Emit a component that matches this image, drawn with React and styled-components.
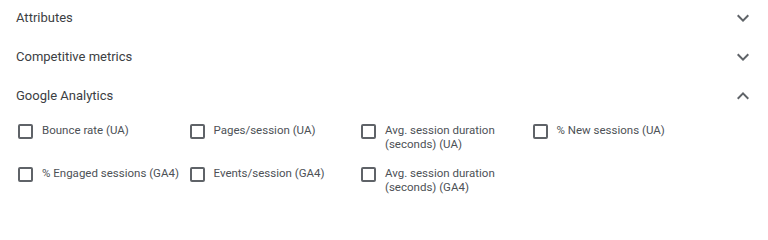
import React, { useState } from "react";
import styled, { createGlobalStyle } from "styled-components";

const GlobalStyle = createGlobalStyle`
  html, body {
    margin: 0;
    padding: 0;
    background: #ffffff;
  }
  body {
    font-family: Roboto, "Noto Sans", Arial, sans-serif;
    -webkit-font-smoothing: antialiased;
  }
`;

const sections = [
  { title: "Attributes", open: false },
  { title: "Competitive metrics", open: false },
  {
    title: "Google Analytics",
    open: true,
    items: [
      "Bounce rate (UA)",
      "Pages/session (UA)",
      "Avg. session duration (seconds) (UA)",
      "% New sessions (UA)",
      "% Engaged sessions (GA4)",
      "Events/session (GA4)",
      "Avg. session duration (seconds) (GA4)",
    ],
  },
];

const Chevron = ({ up }) => (
  <svg width="24" height="24" viewBox="0 0 24 24" fill="#5f6368">
    {up ? (
      <path d="M7.41 15.41 12 10.83l4.59 4.58L18 14l-6-6-6 6z" />
    ) : (
      <path d="M7.41 8.59 12 13.17l4.59-4.58L18 10l-6 6-6-6 1.41-1.41z" />
    )}
  </svg>
);

function Section({ title, open, items }) {
  const [checked, setChecked] = useState({});

  const toggle = (label) => {
    setChecked((c) => ({ ...c, [label]: !c[label] }));
  };

  return (
    <div>
      <Header>
        <Title>{title}</Title>
        <IconButton>
          <Chevron up={open} />
        </IconButton>
      </Header>
      {open && items ? (
        <Options>
          {items.map((label) => (
            <Option key={label} onClick={() => toggle(label)}>
              <Box checked={!!checked[label]} />
              <Label>{label}</Label>
            </Option>
          ))}
        </Options>
      ) : null}
    </div>
  );
}

export default function App() {
  return (
    <>
      <GlobalStyle />
      <Panel>
        {sections.map((s) => (
          <Section key={s.title} {...s} />
        ))}
      </Panel>
    </>
  );
}

const Panel = styled.div`
  width: 768px;
  margin-top: -2px;
`;

const Header = styled.div`
  display: flex;
  align-items: center;
  justify-content: space-between;
  height: 39px;
  padding: 0 13px 0 16px;
  cursor: pointer;
`;

const Title = styled.div`
  font-size: 13px;
  font-weight: 400;
  color: #3c4043;
`;

const IconButton = styled.div`
  display: flex;
  align-items: center;
  justify-content: center;
  width: 24px;
  height: 24px;
`;

const Options = styled.div`
  display: grid;
  grid-template-columns: repeat(4, 171.5px);
  row-gap: 15px;
  padding: 8px 0 0 18px;
`;

const Option = styled.label`
  display: flex;
  align-items: flex-start;
  gap: 9px;
  cursor: pointer;
`;

const Box = styled.span`
  flex: none;
  box-sizing: border-box;
  width: 15px;
  height: 15px;
  margin-top: 1px;
  border: 2px solid #5f6368;
  border-radius: 2px;
  background: ${(p) => (p.checked ? "#1a73e8" : "transparent")};
  border-color: ${(p) => (p.checked ? "#1a73e8" : "#5f6368")};
`;

const Label = styled.span`
  font-size: 11.5px;
  line-height: 14px;
  color: #4d5156;
`;
